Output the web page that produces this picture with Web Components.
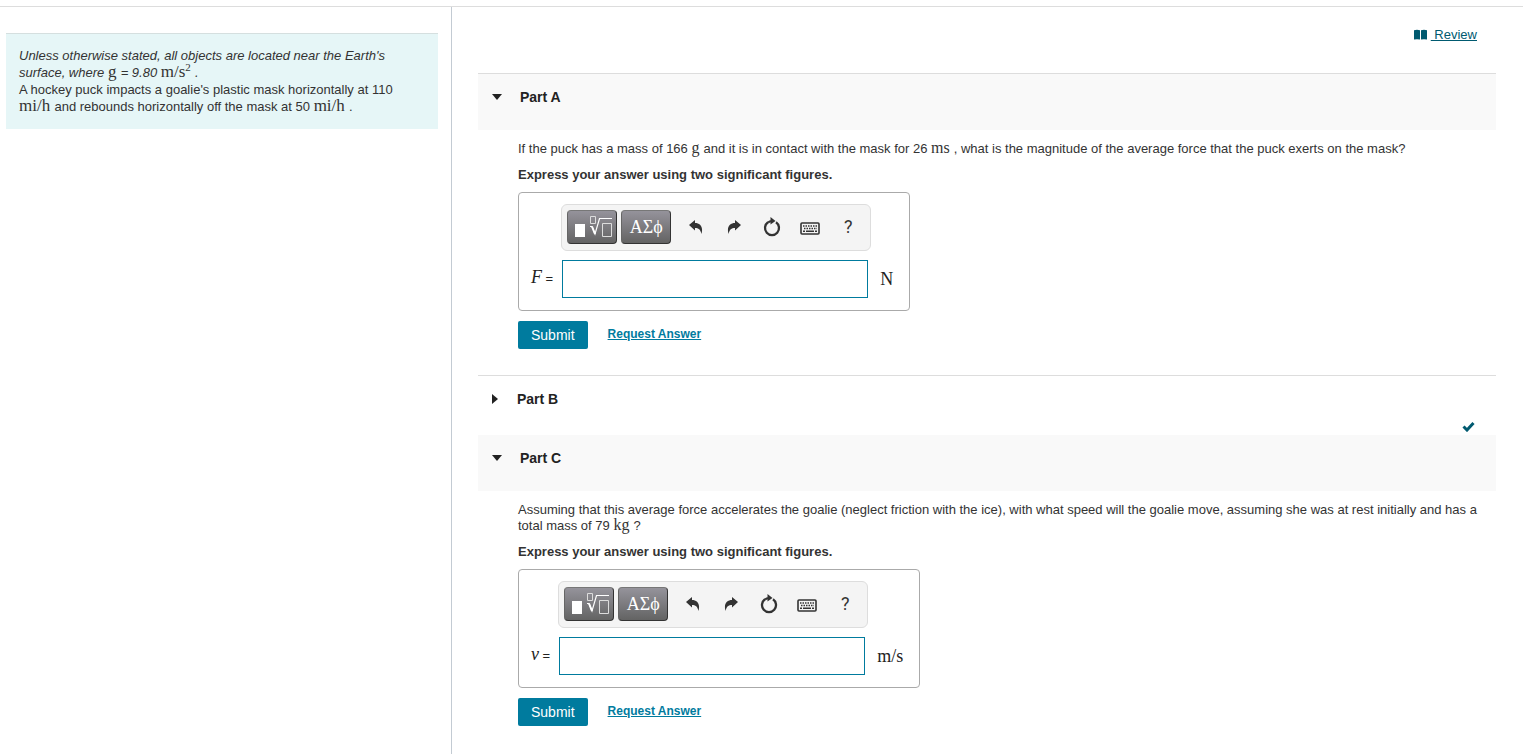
<!DOCTYPE html>
<html lang="en">
<head>
<meta charset="utf-8">
<meta name="viewport" content="width=device-width, initial-scale=1">
<title>Homework - Hockey puck</title>
<style>
    body {
        margin: 0;
        background-color: #fff;
        color: #333;
        font: 13px/16px "Liberation Sans", Arial, sans-serif;
    }
</style>
</head>
<body>
<assignment-page>
    <problem-intro slot="intro">
        <p><i>Unless otherwise stated, all objects are located near the Earth's surface, where <math-unit>g</math-unit> = 9.80 <math-unit>m/s<sup>2</sup></math-unit> .</i></p>
        <p>A hockey puck impacts a goalie's plastic mask horizontally at 110 <math-unit>mi/h</math-unit> and rebounds horizontally off the mask at 50 <math-unit>mi/h</math-unit> .</p>
    </problem-intro>

    <review-link></review-link>

    <part-section label="Part A" open ruled>
        <p>If the puck has a mass of 166 <math-unit>g</math-unit> and it is in contact with the mask for 26 <math-unit>ms</math-unit> , what is the magnitude of the average force that the puck exerts on the mask?</p>
        <answer-form slot="answer" variable="F" unit="N"></answer-form>
    </part-section>

    <part-section label="Part B" ruled done></part-section>

    <part-section label="Part C" open>
        <p>Assuming that this average force accelerates the goalie (neglect friction with the ice), with what speed will the goalie move, assuming she was at rest initially and has a total mass of 79 <math-unit>kg</math-unit> ?</p>
        <answer-form slot="answer" variable="v" unit="m/s"></answer-form>
    </part-section>
</assignment-page>

<script>
class AssignmentPage extends HTMLElement {
    constructor() {
        super();
        this.attachShadow({ mode: 'open' });
        this.shadowRoot.innerHTML = `
            <style>
                * {
                    box-sizing: border-box;
                }
                :host {
                    display: block;
                    padding: 6px 16px 0 0;
                }
                .columns {
                    display: flex;
                    min-height: calc(100vh - 6px);
                    border-top: 1px solid #ddd;
                }
                aside {
                    flex: 0 0 452px;
                    padding: 26px 13px 0 6px;
                    border-right: 1px solid #c3cbd3;
                }
                main {
                    flex: 1;
                    min-width: 0;
                    padding: 18px 27px 0 26px;
                }
            </style>
            <div class="columns">
                <aside><slot name="intro"></slot></aside>
                <main><slot></slot></main>
            </div>
        `;
    }
}

class ProblemIntro extends HTMLElement {
    constructor() {
        super();
        this.attachShadow({ mode: 'open' });
        this.shadowRoot.innerHTML = `
            <style>
                :host {
                    --unit-size: 17px;
                    display: block;
                    padding: 13px 13px 14px;
                    border-top: 1px solid #d5dfdf;
                    background-color: #e6f6f7;
                    line-height: 17px;
                }
                ::slotted(p) {
                    margin: 0;
                }
            </style>
            <slot></slot>
        `;
    }
}

// upright serif units inside a sentence
class MathUnit extends HTMLElement {
    constructor() {
        super();
        this.attachShadow({ mode: 'open' });
        this.shadowRoot.innerHTML = `
            <style>
                :host {
                    display: inline;
                    font-family: "Liberation Serif", "Times New Roman", serif;
                    font-size: var(--unit-size, 16px);
                    font-style: normal;
                    line-height: 1px;
                }
                ::slotted(sup) {
                    font-size: 11px;
                    line-height: 1px;
                    vertical-align: 6px;
                }
            </style>
            <slot></slot>
        `;
    }
}

class ReviewLink extends HTMLElement {
    constructor() {
        super();
        this.attachShadow({ mode: 'open' });
        this.shadowRoot.innerHTML = `
            <style>
                :host {
                    display: flex;
                    justify-content: flex-end;
                    padding: 0 19px 29px 0;
                }
                a {
                    display: flex;
                    align-items: center;
                    gap: 4px;
                    color: #005a70;
                    line-height: 19px;
                    text-decoration: none;
                }
                span {
                    white-space: pre;
                    text-decoration: underline;
                }
            </style>
            <a href="#review">
                <svg width="13" height="12" viewBox="0 0 13 12" fill="currentColor" aria-hidden="true">
                    <path d="M0 1.200Q3 .4 6 1.200V10.500Q3 9.800 0 10.500ZM7 1.200Q10 .4 13 1.200V10.500Q10 9.800 7 10.500Z"/>
                </svg>
                <span> Review</span>
            </a>
        `;
    }
}

class PartSection extends HTMLElement {
    constructor() {
        super();
        this.attachShadow({ mode: 'open' });
    }

    connectedCallback() {
        const label = this.getAttribute('label');
        const open = this.hasAttribute('open');
        const arrow = open ? 'M0 0H10L5 6Z' : 'M0 0V10L6 5Z';

        this.shadowRoot.innerHTML = `
            <style>
                * {
                    box-sizing: border-box;
                }
                :host {
                    display: block;
                }
                :host([ruled]) {
                    border-top: 1px solid #ddd;
                }
                header {
                    display: flex;
                    justify-content: space-between;
                    align-items: flex-start;
                    height: 59px;
                    padding: 13px 21px 0 14px;
                }
                :host([open]) header {
                    height: 56px;
                    background-color: #f9f9f9;
                }
                h2 {
                    margin: 0;
                    font-size: 14px;
                }
                button {
                    display: flex;
                    align-items: center;
                    gap: 18px;
                    padding: 0;
                    border: none;
                    background: none;
                    color: #222;
                    font: bold 14px/20px "Liberation Sans", Arial, sans-serif;
                    cursor: pointer;
                }
                .closed {
                    gap: 19px;
                }
                .check {
                    align-self: flex-end;
                    margin-bottom: 3px;
                    color: #005a70;
                }
                .body {
                    padding: 11px 0 26px 40px;
                }
                .hint {
                    margin: 0 0 9px;
                    font-weight: bold;
                }
                ::slotted(p) {
                    margin: 0 0 10px;
                }
            </style>
            <header>
                <h2>
                    <button type="button" aria-expanded="${open}" class="${open ? '' : 'closed'}">
                        <svg width="${open ? 10 : 6}" height="${open ? 6 : 10}" fill="currentColor" aria-hidden="true"><path d="${arrow}"/></svg>
                        ${label}
                    </button>
                </h2>
                ${this.hasAttribute('done') ? `
                <svg class="check" width="13" height="11" viewBox="0 0 13 11" aria-label="Completed">
                    <path d="M1.500 5.500L5 9L11.500 2" fill="none" stroke="currentColor" stroke-width="3"/>
                </svg>` : ''}
            </header>
            ${open ? `
            <div class="body">
                <slot></slot>
                <p class="hint">Express your answer using two significant figures.</p>
                <slot name="answer"></slot>
            </div>` : ''}
        `;
    }
}

class MathToolbar extends HTMLElement {
    constructor() {
        super();
        this.attachShadow({ mode: 'open' });
        this.shadowRoot.innerHTML = `
            <style>
                * {
                    box-sizing: border-box;
                }
                :host {
                    display: flex;
                    align-items: center;
                    box-sizing: border-box;
                    height: 47px;
                    padding: 0 3px 2px 5px;
                    border: 1px solid #ddd;
                    border-radius: 6px;
                    background-color: #f4f4f4;
                }
                button {
                    display: flex;
                    justify-content: center;
                    align-items: center;
                    width: 38px;
                    height: 34px;
                    padding: 0;
                    border: none;
                    background: none;
                    color: #333;
                    font: 18px/20px Roboto, "Liberation Sans", sans-serif;
                    cursor: pointer;
                }
                .palette {
                    width: 50px;
                    margin-right: 4px;
                    border: 1px solid #333;
                    border-top-color: #777;
                    border-left-color: #666;
                    border-radius: 4px;
                    background: linear-gradient(#95939b, #636363);
                    color: #fff;
                    font: 18px/20px "Liberation Serif", "Times New Roman", serif;
                }
                .undo {
                    margin-left: 2px;
                }
            </style>
            <button type="button" class="palette" aria-label="Templates">
                <svg width="40" height="24" viewBox="0 0 40 24" fill="none" stroke="#fff" aria-hidden="true">
                    <path d="M3 9H13V22H3Z" fill="#fff" stroke="none"/>
                    <path d="M18.500 1.500H23.500V8.500H18.500Z" stroke="#ddd"/>
                    <path d="M18 11.500H20L23 19L27.500 3.500H40" stroke-width="1.200"/>
                    <path d="M20 11.500L23 19" stroke-width="2"/>
                    <path d="M30.500 8.500H39.500V21.500H30.500Z" stroke="#ddd"/>
                </svg>
            </button>
            <button type="button" class="palette">ΑΣϕ</button>
            <button type="button" class="undo" aria-label="Undo">
                <svg width="14" height="14" viewBox="0 0 14 14" fill="currentColor" aria-hidden="true">
                    <path d="M0 5L6 0V3C11 3 14.500 6.500 12.500 14C11.500 9.500 9.500 8 6 8V10.500Z"/>
                </svg>
            </button>
            <button type="button" aria-label="Redo">
                <svg width="14" height="14" viewBox="0 0 14 14" fill="currentColor" aria-hidden="true">
                    <path d="M14 5L8 0V3C3 3 -.5 6.500 1.500 14C2.500 9.500 4.500 8 8 8V10.500Z"/>
                </svg>
            </button>
            <button type="button" aria-label="Reset">
                <svg width="18" height="20" viewBox="0 0 18 20" aria-hidden="true">
                    <path d="M5 5.300A7 7 0 1 0 13 5.300" fill="none" stroke="currentColor" stroke-width="2.300"/>
                    <path d="M7.500 0L12.500 4L7.500 7.500Z" fill="currentColor"/>
                    <path d="M5 5.600Q6.500 4.200 9 4" fill="none" stroke="currentColor" stroke-width="2"/>
                </svg>
            </button>
            <button type="button" aria-label="Keyboard shortcuts">
                <svg width="20" height="18" viewBox="0 0 20 18" fill="none" stroke="currentColor" aria-hidden="true">
                    <rect x="1" y="5" width="18" height="11" rx="1" stroke-width="1.600"/>
                    <path d="M3 8H17M4 10.500H17" stroke-width="1.500" stroke-dasharray="1.500 1"/>
                    <path d="M3 13.300H5M6 13.300H14M15 13.300H17" stroke-width="1.500"/>
                </svg>
            </button>
            <button type="button" aria-label="Help">?</button>
        `;
    }
}

class AnswerForm extends HTMLElement {
    constructor() {
        super();
        this.attachShadow({ mode: 'open' });
    }

    connectedCallback() {
        this.shadowRoot.innerHTML = `
            <style>
                * {
                    box-sizing: border-box;
                }
                :host {
                    display: block;
                }
                .box {
                    display: inline-grid;
                    grid-template-columns: auto 306px auto;
                    align-items: center;
                    row-gap: 9px;
                    padding: 11px 16px 12px 12px;
                    border: 1px solid #aaa;
                    border-radius: 4px;
                    vertical-align: top;
                }
                math-toolbar {
                    grid-column: 2;
                    margin: 0 -3px 0 -1px;
                }
                label {
                    grid-column: 1;
                    padding-right: 9px;
                    color: #222;
                }
                i, .unit {
                    color: #222;
                    font-family: "Liberation Serif", "Times New Roman", serif;
                    font-size: 18px;
                    line-height: 1px;
                }
                .unit {
                    padding-left: 12px;
                }
                input {
                    width: 100%;
                    height: 38px;
                    padding: 0 8px;
                    border: 1px solid #007b9e;
                    background-color: #fff;
                    font-size: 16px;
                }
                .actions {
                    display: flex;
                    align-items: center;
                    gap: 20px;
                    margin-top: 10px;
                }
                button {
                    height: 28px;
                    padding: 0 13px;
                    border: none;
                    border-radius: 2px;
                    background-color: #007b9e;
                    color: #fff;
                    font: 14px/28px "Liberation Sans", Arial, sans-serif;
                    cursor: pointer;
                }
                a {
                    padding-bottom: 3px;
                    color: #007b9e;
                    font-size: 12px;
                    font-weight: bold;
                }
            </style>
            <div class="box">
                <math-toolbar></math-toolbar>
                <label for="answer"><i>${this.getAttribute('variable')}</i> =</label>
                <input id="answer" type="text">
                <span class="unit">${this.getAttribute('unit')}</span>
            </div>
            <div class="actions">
                <button type="button">Submit</button>
                <a href="#answer">Request Answer</a>
            </div>
        `;
    }
}

customElements.define('assignment-page', AssignmentPage);
customElements.define('problem-intro', ProblemIntro);
customElements.define('math-unit', MathUnit);
customElements.define('review-link', ReviewLink);
customElements.define('math-toolbar', MathToolbar);
customElements.define('answer-form', AnswerForm);
customElements.define('part-section', PartSection);
</script>
</body>
</html>
